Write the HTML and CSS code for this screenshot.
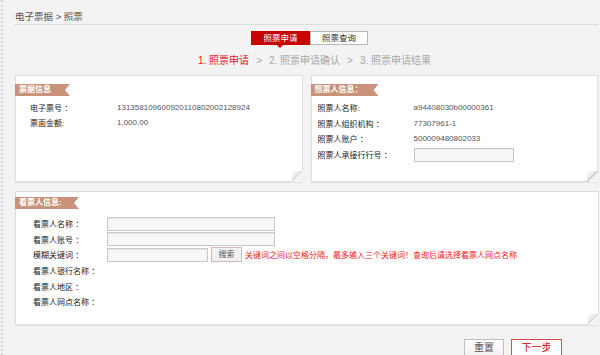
FILE: index.html
```html
<!DOCTYPE html>
<html lang="zh-CN">
<head>
<meta charset="utf-8">
<title>照票</title>
<link rel="stylesheet" href="styles.css">
</head>
<body>
<div class="page">
  <div class="crumb">电子票据 &gt; 照票</div>
  <div class="tabs">
    <div class="tab tab-on">照票申请</div>
    <div class="tab tab-off">照票查询</div>
  </div>
  <div class="steps">
    <span class="step-on">1. 照票申请</span>
    <span class="sep">&gt;</span>
    <span>2. 照票申请确认</span>
    <span class="sep">&gt;</span>
    <span>3. 照票申请结果</span>
  </div>
  <div class="panels">
    <div class="panel panel-left">
      <div class="ribbon r1">票据信息</div>
      <div class="rows rows-left">
        <div class="row"><span class="lbl lbl-l">电子票号 ：</span><span class="val">131358109600920110802002128924</span></div>
        <div class="row"><span class="lbl lbl-l">票面金额:</span><span class="val">1,000.00</span></div>
      </div>
    </div>
    <div class="panel panel-right">
      <div class="ribbon r2">照票人信息：</div>
      <div class="rows rows-right">
        <div class="row"><span class="lbl lbl-r">照票人名称:</span><span class="val">a94408030b00000361</span></div>
        <div class="row"><span class="lbl lbl-r">照票人组织机构 ：</span><span class="val">77307961-1</span></div>
        <div class="row"><span class="lbl lbl-r">照票人账户 ：</span><span class="val">500009480802033</span></div>
        <div class="row"><span class="lbl lbl-r">照票人承接行行号 ：</span><span class="inp inp-r"></span></div>
      </div>
    </div>
  </div>
  <div class="panel panel-wide">
    <div class="ribbon r3">看票人信息:</div>
    <div class="rows rows-wide">
      <div class="row"><span class="lbl lbl-w">看票人名称 ：</span><span class="inp inp-long"></span></div>
      <div class="row"><span class="lbl lbl-w">看票人账号 ：</span><span class="inp inp-long"></span></div>
      <div class="row"><span class="lbl lbl-w">模糊关键词 ：</span><span class="inp inp-short"></span><span class="search">搜索</span><span class="hint">关键词之间以空格分隔，最多输入三个关键词！查询后请选择看票人网点名称</span></div>
      <div class="row"><span class="lbl lbl-w">看票人银行名称 ：</span></div>
      <div class="row"><span class="lbl lbl-w">看票人地区 ：</span></div>
      <div class="row"><span class="lbl lbl-w">看票人网点名称 ：</span></div>
    </div>
  </div>
  <div class="actions">
    <span class="btn btn-reset">重置</span>
    <span class="btn btn-next">下一步</span>
  </div>
</div>
</body>
</html>
```

FILE: styles.css
```css
html, body {
  margin: 0;
  padding: 0;
}
body {
  width: 600px;
  height: 355px;
  overflow: hidden;
  background: #f3f3f3;
  font-family: "Liberation Sans", "Noto Sans CJK SC", sans-serif;
  font-size: 8px;
  color: #333;
}
.page {
  margin-left: 1px;
  border-left: 2px dotted #d6d6d6;
  padding: 0 2px 0 12px;
  height: 355px;
  box-sizing: border-box;
}
.crumb {
  padding-top: 12px;
  height: 12px;
  line-height: 10px;
  font-size: 9.5px;
  color: #555;
  border-bottom: 1px dotted #c8c8c8;
}
.tabs {
  display: flex;
  margin-top: 6px;
  padding-left: 236px;
  height: 14px;
}
.tab {
  height: 14px;
  line-height: 14px;
  text-align: center;
  font-size: 8.5px;
  box-sizing: border-box;
}
.tab-on {
  position: relative;
  width: 59px;
  background: #c90000;
  color: #fff;
}
.tab-on::after {
  content: "";
  position: absolute;
  left: 26px;
  top: 14px;
  border-left: 3px solid transparent;
  border-right: 3px solid transparent;
  border-top: 3px solid #c90000;
}
.tab-off {
  width: 58px;
  background: #fff;
  border: 1px solid #b8b8b8;
  line-height: 12px;
  color: #333;
}
.steps {
  margin-top: 10px;
  padding-left: 183px;
  height: 12px;
  line-height: 12px;
  font-size: 10px;
  color: #a8a8a8;
  display: flex;
  gap: 5px;
}
.step-on {
  color: #e02020;
}
.sep {
  padding: 0 2px;
}
.panels {
  display: flex;
  gap: 8px;
  margin-top: 8px;
}
.panel {
  position: relative;
  background: #fff;
  border: 1px solid #dedede;
  box-shadow: 0 1px 1px #e4e4e4;
  box-sizing: border-box;
}
.panel::after {
  content: "";
  position: absolute;
  right: -1px;
  bottom: -1px;
  width: 11px;
  height: 11px;
  background: linear-gradient(135deg, #ffffff 0%, #e6e6e6 40%, #c4c4c4 50%, #f3f3f3 50%);
}
.panel-left {
  width: 288px;
  height: 107px;
}
.panel-right {
  width: 288px;
  height: 107px;
}
.panel-wide {
  width: 584px;
  height: 134px;
  margin-top: 9px;
}
.ribbon {
  margin-left: -1px;
  height: 12px;
  line-height: 12px;
  padding-left: 4px;
  background: #c8937a;
  color: #fff;
  font-weight: bold;
  font-size: 8px;
  clip-path: polygon(0 0, 100% 0, calc(100% - 5px) 50%, 100% 100%, 0 100%);
  box-sizing: border-box;
}
.r1 {
  margin-top: 8px;
  width: 55px;
}
.r2 {
  margin-top: 8px;
  width: 68px;
}
.r3 {
  margin-top: 5px;
  width: 64px;
}
.rows-left {
  margin-top: 4px;
  padding-left: 14px;
}
.rows-right {
  margin-top: 4px;
  padding-left: 6px;
}
.rows-wide {
  margin-top: 7px;
  padding-left: 17px;
}
.row {
  display: flex;
  align-items: center;
  height: 15.6px;
}
.rows-left .row {
  height: 15px;
}
.lbl {
  color: #222;
  white-space: nowrap;
}
.lbl-l {
  width: 87px;
}
.lbl-r {
  width: 96px;
}
.lbl-w {
  width: 74px;
}
.val {
  color: #555;
}
.inp {
  display: block;
  height: 14px;
  background: #f7f7f7;
  border: 1px solid #c9c9c9;
  box-shadow: inset 0 1px 1px #e6e6e6;
  box-sizing: border-box;
}
.inp-r {
  width: 100px;
}
.inp-long {
  width: 168px;
}
.inp-short {
  width: 101px;
}
.search {
  margin-left: 3px;
  width: 31px;
  height: 15px;
  line-height: 13px;
  text-align: center;
  background: #f2f0f0;
  border: 1px solid #d4b8b8;
  color: #555;
  box-sizing: border-box;
}
.hint {
  margin-left: 3px;
  color: #f01818;
  white-space: nowrap;
}
.actions {
  display: flex;
  justify-content: flex-end;
  gap: 7px;
  margin-top: 14px;
  padding-right: 36px;
}
.btn {
  height: 18px;
  line-height: 16px;
  text-align: center;
  font-size: 10px;
  background: #fff;
  box-sizing: border-box;
}
.btn-reset {
  width: 40px;
  border: 1px solid #bdbdbd;
  color: #555;
  background: linear-gradient(#ffffff, #f0f0f0);
}
.btn-next {
  width: 51px;
  border: 1px solid #d05050;
  color: #d00000;
}
```
